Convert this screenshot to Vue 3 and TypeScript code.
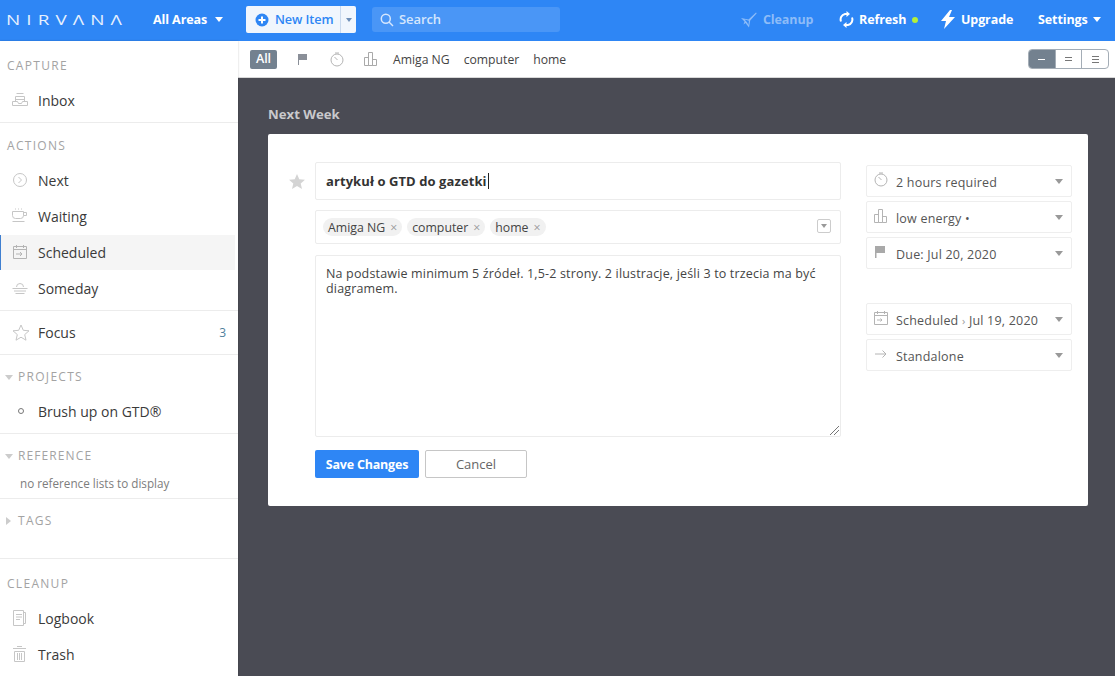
<script setup lang="ts">
const filters = ['Amiga NG', 'computer', 'home']
const tags = ['Amiga NG', 'computer', 'home']
</script>

<template>
  <div class="app">
    <header class="top">
      <div class="logo"><span>NIRVΛNΛ</span></div>
      <div class="areas">All Areas <i class="caret white"></i></div>
      <div class="newitem">
        <span class="ni-main">
          <svg width="14" height="14" viewBox="0 0 14 14"><circle cx="7" cy="7" r="6.5" fill="#2f86f4"/><path d="M7 3.5v7M3.5 7h7" stroke="#fff" stroke-width="2"/></svg>
          <b>New Item</b>
        </span>
        <span class="ni-drop"><i class="caret mini"></i></span>
      </div>
      <div class="search">
        <svg width="14" height="14" viewBox="0 0 14 14" fill="none" stroke="#d5e6fd" stroke-width="1.5"><circle cx="5.8" cy="5.8" r="4.5"/><path d="M9 9l4 4"/></svg>
        <b>Search</b>
      </div>
      <div class="top-right">
        <span class="tact dim">
          <svg width="16" height="16" viewBox="0 0 16 16" fill="#8dbcf8" fill-rule="evenodd"><path d="M0 6l7.500 1.500L15 .5l.7.7L9.200 8.500 8 15.500 4.500 11 2.500 12.500 3.500 9.500zM3.500 7.400l2.500 2.800L7.500 13l.4-4.300z"/></svg>
          <span>Cleanup</span>
        </span>
        <span class="tact refresh">
          <svg width="15" height="17" viewBox="0 0 15 17" fill="none" stroke="#fff" stroke-width="2"><path d="M2 10.500A5.600 5.600 0 0 1 6 3h2"/><path d="M13 6.500A5.600 5.600 0 0 1 9 14H7"/><path d="M7.500 0v6l3.500-3zM7.500 17v-6l-3.500 3z" fill="#fff" stroke="none"/></svg>
          <span>Refresh</span> <i class="dot"></i>
        </span>
        <span class="tact upgrade">
          <svg width="14" height="19" viewBox="0 0 14 19" fill="#fff"><path d="M9 0L0 11h5l-2 8 11-12H8l3-7z"/></svg>
          <span>Upgrade</span>
        </span>
        <span class="tact settings"><span>Settings</span> <i class="caret white"></i></span>
      </div>
    </header>

    <div class="body">
      <aside class="side">
        <section class="sec s-capture">
          <h4 class="head">CAPTURE</h4>
          <div class="row">
            <svg class="ic" width="16" height="16" viewBox="0 0 16 16" fill="none" stroke="#c6c6c6"><path d="M4.500 1.500h7M3.500 4.500h9M3.500 7.500h9M3.500 4.500v5M12.500 4.500v5M.5 9.500h5l1 2h3l1-2h5v4H.5z"/></svg>
            Inbox
          </div>
        </section>
        <section class="sec s-actions">
          <h4 class="head">ACTIONS</h4>
          <div class="row">
            <svg class="ic" width="16" height="16" viewBox="0 0 16 16" fill="none" stroke="#c6c6c6"><circle cx="8" cy="8" r="6.500"/><path d="M6.500 5l3 3-3 3"/></svg>
            Next
          </div>
          <div class="row">
            <svg class="ic" width="16" height="16" viewBox="0 0 16 16" fill="none" stroke="#c6c6c6"><path d="M.5 3.500h11v4a3 3 0 0 1-3 3h-5a3 3 0 0 1-3-3zM11.500 4.500h3v3h-3M.5 13.500h12"/><path d="M3 1h7" stroke-dasharray="1 2"/></svg>
            Waiting
          </div>
          <div class="row active">
            <svg class="ic" width="16" height="16" viewBox="0 0 16 16" fill="none" stroke="#b4b4b4"><path d="M1.500 2.500h13v12h-13zM1.500 5.500h13M4.500 1v3M11.500 1v3M4 10h6M8 8l2 2-2 2"/></svg>
            Scheduled
          </div>
          <div class="row">
            <svg class="ic" width="16" height="16" viewBox="0 0 16 16" fill="none" stroke="#c6c6c6"><path d="M4.500 7a3.500 3.500 0 0 1 7 0M.5 8.500h15M2 11h12M3.500 13.500h9"/></svg>
            Someday
          </div>
        </section>
        <section class="sec s-focus">
          <div class="row">
            <svg class="ic star" width="18" height="17" viewBox="0 0 18 17" fill="none" stroke="#c6c6c6"><path d="M9 1l2.300 5.300 5.700.5-4.300 3.800 1.300 5.600L9 13.200l-5 3 1.300-5.600L1 6.800l5.700-.5z"/></svg>
            Focus
            <span class="count">3</span>
          </div>
        </section>
        <section class="sec s-projects">
          <h4 class="head ind"><i class="tri down"></i>PROJECTS</h4>
          <div class="row">
            <span class="ic bullet"><i></i></span>
            Brush up on GTD®
          </div>
        </section>
        <section class="sec s-reference">
          <h4 class="head ind"><i class="tri down"></i>REFERENCE</h4>
          <div class="none">no reference lists to display</div>
        </section>
        <section class="sec s-tags">
          <h4 class="head ind"><i class="tri right"></i>TAGS</h4>
        </section>
        <section class="sec s-cleanup">
          <h4 class="head">CLEANUP</h4>
          <div class="row">
            <svg class="ic" width="16" height="16" viewBox="0 0 16 16" fill="none" stroke="#c6c6c6"><path d="M1.500 .5h10v15h-10zM4 4.500h6M4 7h6M4 9.500h4M11.500 2.500h2v11h-2"/></svg>
            Logbook
          </div>
          <div class="row">
            <svg class="ic" width="16" height="16" viewBox="0 0 16 16" fill="none" stroke="#c6c6c6"><path d="M1 2.500h13M5 .5h5M2.500 5.500h10v10h-10zM5.500 7v7M7.500 7v7M9.500 7v7"/></svg>
            Trash
          </div>
        </section>
      </aside>

      <main class="main">
        <nav class="filter">
          <span class="all">All</span>
          <svg class="f-flag" width="10" height="11" viewBox="0 0 10 11" fill="#8a8f98"><path d="M0 0h9v6H1v5H0z"/></svg>
          <svg class="f-clock" width="14" height="15" viewBox="0 0 14 15" fill="none" stroke="#b4b4b4"><circle cx="7" cy="8" r="6"/><path d="M5 1h4M4.500 5l3 3"/></svg>
          <svg class="f-bars" width="14" height="14" viewBox="0 0 14 14" fill="none" stroke="#a9a9a9"><path d="M.5 5.500h4v8h-4zM4.500 .5h4v13h-4zM8.500 7.500h4v6h-4z"/></svg>
          <span v-for="f in filters" :key="f" class="f-tag">{{ f }}</span>
          <div class="seg">
            <span class="seg-b on"><i></i></span>
            <span class="seg-b"><i></i><i></i></span>
            <span class="seg-b"><i></i><i></i><i></i></span>
          </div>
        </nav>

        <div class="content">
          <h2 class="title">Next Week</h2>
          <div class="card">
            <svg class="bigstar" width="16" height="15" viewBox="0 0 16 15" fill="#d4d4d4"><path d="M8 0l2.300 5.200 5.700.5-4.300 3.800 1.300 5.500L8 12.100 3 15l1.300-5.500L0 5.700l5.700-.5z"/></svg>
            <div class="center">
              <div class="box name">artykuł o GTD do gazetki<span class="cursor"></span></div>
              <div class="box tags">
                <span v-for="t in tags" :key="t" class="tag">{{ t }}<em>×</em></span>
                <span class="tagdrop"><i class="caret mini gray"></i></span>
              </div>
              <div class="box note">Na podstawie minimum 5 źródeł. 1,5-2 strony. 2 ilustracje, jeśli 3 to trzecia ma być diagramem.
                <svg class="grip" width="9" height="9" viewBox="0 0 9 9" stroke="#777"><path d="M0 9l9-9M4 9l5-5"/></svg>
              </div>
              <div class="btns">
                <span class="save">Save Changes</span>
                <span class="cancel">Cancel</span>
              </div>
            </div>
            <div class="props">
              <div class="group">
                <div class="prop">
                  <svg width="14" height="15" viewBox="0 0 14 15" fill="none" stroke="#b4b4b4"><circle cx="7" cy="8" r="6"/><path d="M5 1h4M4.500 5l3 3"/></svg>
                  <span>2 hours required</span><i class="caret gray"></i>
                </div>
                <div class="prop">
                  <svg width="14" height="14" viewBox="0 0 14 14" fill="none" stroke="#b4b4b4"><path d="M.5 5.500h4v8h-4zM4.500 .5h4v13h-4zM8.500 7.500h4v6h-4z"/></svg>
                  <span>low energy •</span><i class="caret gray"></i>
                </div>
                <div class="prop">
                  <svg width="14" height="14" viewBox="0 0 14 14" fill="#a9a9a9"><path d="M1 1h10v7H2.500v5H1z"/></svg>
                  <span>Due: Jul 20, 2020</span><i class="caret gray"></i>
                </div>
              </div>
              <div class="group">
                <div class="prop">
                  <svg width="14" height="14" viewBox="0 0 14 14" fill="none" stroke="#b4b4b4"><path d="M.5 1.500h13v12H.5zM.5 4.500h13M3.500 0v3M10.500 0v3M3 9h5M6.500 7.500L8 9l-1.500 1.500"/></svg>
                  <span>Scheduled <small>›</small> Jul 19, 2020</span><i class="caret gray"></i>
                </div>
                <div class="prop">
                  <svg width="14" height="14" viewBox="0 0 14 14" fill="none" stroke="#b4b4b4"><path d="M1 7h11M8.500 3.500L12 7l-3.500 3.500"/></svg>
                  <span>Standalone</span><i class="caret gray"></i>
                </div>
              </div>
            </div>
          </div>
        </div>
      </main>
    </div>
  </div>
</template>

<style>
html, body { margin: 0; height: 100%; overflow: hidden; }
</style>

<style scoped>
.app { width: 1115px; height: 676px; display: flex; flex-direction: column; font-family: "Open Sans", "Noto Sans", sans-serif; font-size: 14px; color: #333; overflow: hidden; }
i, em { font-style: normal; display: inline-block; }
h2, h4 { margin: 0; }
b { font-weight: inherit; position: relative; top: -1px; }

.caret { width: 0; height: 0; border-left: 4px solid transparent; border-right: 4px solid transparent; border-top: 5px solid #999; }
.caret.white { border-top-color: #fff; margin-left: 5px; vertical-align: 2px; }
.caret.mini { border-left-width: 3px; border-right-width: 3px; border-top-width: 4px; border-top-color: #6f8fb8; }
.caret.mini.gray { border-top-color: #999; }

.top { height: 41px; box-sizing: border-box; padding-bottom: 2px; flex: none; background: #2e86f5; display: flex; align-items: center; color: #fff; font-weight: 700; font-size: 12.500px; letter-spacing: -.1px; }
.logo { width: 153px; box-sizing: border-box; padding-left: 6px; font-weight: 400; font-size: 14px; letter-spacing: 4.500px; color: #e6f0fe; white-space: nowrap; }
.logo span { display: inline-block; transform: scaleX(1.35); transform-origin: left center; }
.areas { width: 93px; margin-top: -1px; }
.newitem { display: flex; width: 110px; height: 27px; background: #f1f6fd; border-radius: 2px; color: #2e86f5; font-weight: 600; }
.ni-main { flex: 1; display: flex; align-items: center; gap: 6px; padding-left: 9px; font-size: 12.700px; }
.ni-drop { width: 15px; border-left: 1px solid #c9d9ee; display: flex; align-items: center; justify-content: center; }
.search { margin-left: 16px; width: 188px; height: 25px; box-sizing: border-box; padding-left: 8px; background: #4a96f6; border-radius: 3px; display: flex; align-items: center; gap: 5px; color: #d5e6fd; font-weight: 600; font-size: 13px; }
.top-right { margin-left: auto; display: flex; align-items: center; }
.tact { display: flex; align-items: center; gap: 6px; }
.tact.dim { color: #8dbcf8; width: 98px; }
.tact.refresh { width: 102px; gap: 5px; }
.tact.upgrade { width: 97px; }
.tact.settings { width: 77px; gap: 0; }
.dot { width: 6px; height: 6px; border-radius: 50%; background: #b4f03a; margin-left: 1px; }

.body { flex: 1; display: flex; min-height: 0; }
.side { width: 238px; flex: none; background: #fff; display: flex; flex-direction: column; z-index: 2; box-shadow: 0 0 2px rgba(0,0,0,.2); }
.sec { border-bottom: 1px solid #ececec; }
.head { font-weight: 400; font-size: 12px; letter-spacing: 1.300px; color: #a3a3a3; padding-left: 7px; line-height: 16px; }
.head.ind { padding-left: 5px; display: flex; align-items: center; }
.row { height: 36px; display: flex; align-items: center; padding-left: 12px; font-size: 14px; color: #3a3a3a; position: relative; }
.row.active { background: #f5f5f5; margin-right: 3px; height: 35px; margin-top: 1px; padding-bottom: 1px; box-sizing: border-box; }
.row.active::before { content: ""; position: absolute; left: 0; top: 0; bottom: 0; width: 1px; background: #3f7fd0; }
.ic { width: 16px; margin-right: 10px; flex: none; }
.star { width: 18px; margin-left: 0; margin-right: 8px; }
.bullet { display: flex; justify-content: center; margin-left: 1px; margin-right: 9px; }
.bullet i { width: 6px; height: 6px; box-sizing: border-box; border: 1px solid #777; border-radius: 50%; }
.count { position: absolute; right: 12px; font-size: 12px; color: #4f7f9c; }
.tri { width: 0; height: 0; margin-right: 5px; }
.tri.down { border-left: 4px solid transparent; border-right: 4px solid transparent; border-top: 5px solid #ccc; }
.tri.right { border-top: 4px solid transparent; border-bottom: 4px solid transparent; border-left: 5px solid #ccc; margin-left: 1px; margin-right: 7px; }
.s-capture { height: 82px; box-sizing: border-box; padding-top: 17px; }
.s-capture .head { margin-bottom: 8px; }
.s-actions { height: 188px; box-sizing: border-box; padding-top: 15px; }
.s-actions .head { margin-bottom: 8px; }
.s-focus { height: 44px; box-sizing: border-box; padding-top: 3px; }
.s-projects { height: 79px; box-sizing: border-box; padding-top: 14px; }
.s-projects .head { margin-bottom: 8px; }
.s-reference { height: 65px; box-sizing: border-box; padding-top: 14px; }
.s-reference .head { letter-spacing: 1.100px; }
.none { font-size: 11.700px; color: #7d7d7d; padding-left: 20px; margin-top: 11px; line-height: 16px; }
.s-tags { height: 60px; box-sizing: border-box; padding-top: 14px; }
.s-cleanup { border-bottom: 0; padding-top: 17px; }
.s-cleanup .head { margin-bottom: 8px; }

.main { flex: 1; display: flex; flex-direction: column; background: #4a4b54; min-width: 0; }
.filter { height: 37px; flex: none; background: #fff; border-bottom: 1px solid #d8d8d8; box-sizing: border-box; display: flex; align-items: center; padding-left: 12px; padding-right: 6px; font-size: 12.200px; color: #444; }
.all { width: 27px; height: 19px; line-height: 18px; text-align: center; background: #73818f; color: #fff; border-radius: 2px; font-weight: 600; font-size: 12.500px; }
.f-flag { margin-left: 21px; }
.f-clock { margin-left: 22px; }
.f-bars { margin-left: 20px; margin-right: 15px; }
.f-tag { margin-right: 14px; }
.seg { margin-left: auto; display: flex; width: 81px; height: 20px; border: 1px solid #a4adb6; border-radius: 4px; overflow: hidden; box-sizing: border-box; }
.seg-b { flex: 1; display: flex; flex-direction: column; align-items: center; justify-content: center; gap: 2px; border-left: 1px solid #a4adb6; }
.seg-b:first-child { border-left: 0; }
.seg-b.on { background: #73818f; }
.seg-b i { width: 7px; height: 1px; background: #777; }
.seg-b.on i { background: #fff; }

.content { flex: 1; padding: 28px 27px 0 30px; }
.title { font-size: 13.200px; font-weight: 700; color: #c9c9cc; line-height: 16px; }
.card { margin-top: 12px; height: 372px; background: #fff; border-radius: 2px; box-sizing: border-box; padding: 28px 16px 0 21px; display: flex; position: relative; }
.bigstar { margin-top: 12px; flex: none; }
.center { width: 526px; margin-left: 10px; flex: none; }
.box { border: 1px solid #ececec; border-radius: 2px; box-sizing: border-box; }
.name { height: 38px; display: flex; align-items: center; padding-left: 10px; font-weight: 700; font-size: 13px; letter-spacing: .08px; color: #333; }
.cursor { width: 1px; height: 16px; background: #222; margin-left: 1px; }
.tags { height: 34px; margin-top: 10px; display: flex; align-items: center; padding-left: 7px; gap: 5px; position: relative; font-size: 12.300px; }
.tag { height: 18px; line-height: 20px; background: #f1f1f1; border-radius: 9px; padding: 0 5px; color: #444; }
.tag em { color: #999; margin-left: 5px; }
.tagdrop { position: absolute; right: 9px; top: 8px; width: 14px; height: 14px; box-sizing: border-box; border: 1px solid #ccc; border-radius: 2px; display: flex; align-items: center; justify-content: center; }
.note { height: 182px; margin-top: 11px; padding: 10px 10px; font-size: 12.500px; letter-spacing: .17px; line-height: 15px; color: #444; position: relative; }
.grip { position: absolute; right: 1px; bottom: 1px; }
.btns { margin-top: 13px; display: flex; gap: 6px; }
.save { width: 104px; height: 28px; line-height: 29px; background: #2e86f5; color: #fff; text-align: center; border-radius: 2px; font-weight: 700; font-size: 12.500px; letter-spacing: -.2px; }
.cancel { width: 102px; height: 28px; line-height: 26px; box-sizing: border-box; border: 1px solid #c6c6c6; text-align: center; border-radius: 2px; color: #666; font-size: 13px; }
.props { width: 206px; margin-left: 25px; margin-top: 3px; flex: none; }
.group { display: flex; flex-direction: column; gap: 4px; }
.group + .group { margin-top: 34px; }
.prop { height: 32px; box-sizing: border-box; border: 1px solid #eee; border-radius: 2px; display: flex; align-items: center; padding-left: 7px; font-size: 12.500px; letter-spacing: .2px; color: #555; }
.prop svg { flex: none; margin-right: 8px; margin-top: -3px; }
.prop span { flex: 1; margin-top: 2px; }
.prop .caret { margin-right: 8px; margin-top: 0; border-left-width: 4.500px; border-right-width: 4.500px; }
.prop small { color: #999; font-size: 11px; }
</style>
